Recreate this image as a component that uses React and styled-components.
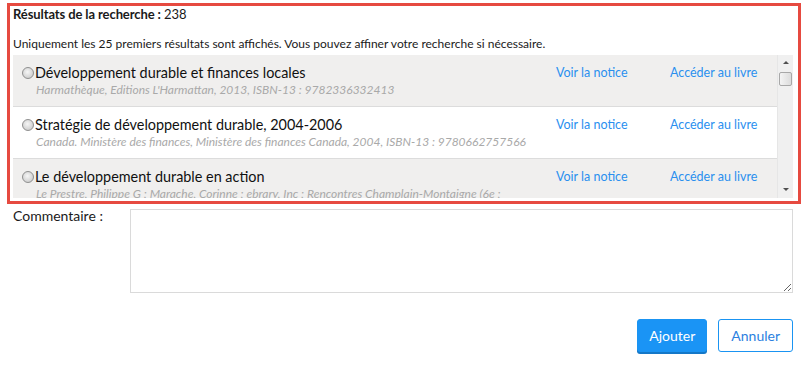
import React from "react";
import styled, { createGlobalStyle } from "styled-components";

const Global = createGlobalStyle`
  html, body { margin: 0; padding: 0; background: #fff; }
  body { font-family: Lato, "Open Sans", sans-serif; color: #1a1a1a; }
`;

const Page = styled.div`
  width: 805px;
  height: 365px;
  box-sizing: border-box;
  padding: 3px 4px 0 7px;
  display: flex;
  flex-direction: column;
`;

const Panel = styled.section`
  border: 3px solid #e64a40;
  padding: 0 5px 3px 3px;
  display: flex;
  flex-direction: column;
`;

const Title = styled.div`
  font-size: 13px;
  letter-spacing: -0.1px;
  line-height: 16px;
  b { font-weight: 700; }
`;

const Info = styled.div`
  font-size: 12px;
  line-height: 16px;
  margin-top: 14px;
`;

const ListBox = styled.div`
  margin-top: 3px;
  height: 143px;
  display: flex;
  overflow: hidden;
`;

const Rows = styled.div`
  flex: 1;
  overflow: hidden;
`;

const Row = styled.div`
  height: 52px;
  box-sizing: border-box;
  border-bottom: 1px solid #dcdcdc;
  background: ${(p) => (p.$alt ? "#f0efee" : "#fff")};
  display: grid;
  grid-template-columns: 1fr 114px 107px;
  align-items: start;
  padding-left: 9px;
  padding-top: 9px;
`;

const Main = styled.div`
  display: flex;
  flex-direction: column;
  min-width: 0;
`;

const TitleLine = styled.label`
  display: flex;
  align-items: center;
  font-size: 14.4px;
  line-height: 18px;
  color: #111;
`;

const Radio = styled.span`
  width: 12px;
  height: 12px;
  border-radius: 50%;
  border: 1px solid #8f8f8f;
  background: radial-gradient(circle at 45% 40%, #f6f6f6, #cfcfcf 75%);
  box-sizing: border-box;
  margin-right: 1px;
  flex: none;
`;

const Sub = styled.div`
  font-size: 12px;
  line-height: 15px;
  font-style: italic;
  color: #a9a9a9;
  padding-left: 14px;
  white-space: nowrap;
  overflow: hidden;
`;

const LinkCell = styled.a`
  font-size: 12.5px;
  line-height: 18px;
  color: #2a8fef;
  text-decoration: none;
  white-space: nowrap;
`;

const Scrollbar = styled.div`
  width: 16px;
  background: #f0f0f0;
  border-left: 1px solid #e6e6e6;
  display: flex;
  flex-direction: column;
  align-items: center;
  justify-content: space-between;
  padding: 6px 0 7px;
  box-sizing: border-box;
  position: relative;
`;

const Arrow = styled.span`
  width: 0;
  height: 0;
  border-left: 3px solid transparent;
  border-right: 3px solid transparent;
  ${(p) =>
    p.$down ? "border-top: 3px solid #505050;" : "border-bottom: 3px solid #505050;"}
`;

const Thumb = styled.span`
  position: absolute;
  top: 17px;
  left: 1px;
  width: 13px;
  height: 14px;
  box-sizing: border-box;
  border: 1px solid #a8a8a8;
  border-radius: 2px;
  background: linear-gradient(to right, #f4f4f4, #dcdcdc);
`;

const CommentRow = styled.div`
  display: flex;
  margin-top: 5px;
`;

const CommentLabel = styled.label`
  width: 117px;
  padding-left: 6px;
  font-size: 14px;
  line-height: 14px;
  flex: none;
`;

const TextArea = styled.textarea`
  flex: 1;
  height: 84px;
  box-sizing: border-box;
  border: 1px solid #dadada;
  margin: 0 8px 0 0;
  font-family: inherit;
  resize: vertical;
  outline: none;
`;

const Actions = styled.div`
  display: flex;
  justify-content: flex-end;
  gap: 11px;
  margin-top: 26px;
  padding-right: 8px;
`;

const Button = styled.button`
  height: 33px;
  padding: 0 ${(p) => (p.$primary ? "11px" : "12px")};
  border-radius: 3px;
  font-family: inherit;
  font-size: 14px;
  border: 1px solid #1a94f2;
  background: ${(p) => (p.$primary ? "#1a94f5" : "#fff")};
  color: ${(p) => (p.$primary ? "#fff" : "#2c7fe0")};
  box-shadow: ${(p) => (p.$primary ? "0 2px 0 #1478c8" : "none")};
  cursor: pointer;
`;

const results = [
  {
    title: "Développement durable et finances locales",
    sub: "Harmathèque, Editions L'Harmattan, 2013, ISBN-13 : 9782336332413",
  },
  {
    title: "Stratégie de développement durable, 2004-2006",
    sub: "Canada. Ministère des finances, Ministère des finances Canada, 2004, ISBN-13 : 9780662757566",
  },
  {
    title: "Le développement durable en action",
    sub: "Le Prestre, Philippe G ; Marache, Corinne ; ebrary, Inc ; Rencontres Champlain-Montaigne (6e ;",
  },
];

export default function App() {
  return (
    <Page>
      <Global />
      <Panel>
        <Title>
          <b>Résultats de la recherche :</b> 238
        </Title>
        <Info>
          Uniquement les 25 premiers résultats sont affichés. Vous pouvez affiner votre recherche si nécessaire.
        </Info>
        <ListBox>
          <Rows>
            {results.map((r, i) => (
              <Row key={i} $alt={i % 2 === 0}>
                <Main>
                  <TitleLine>
                    <Radio />
                    {r.title}
                  </TitleLine>
                  <Sub>{r.sub}</Sub>
                </Main>
                <LinkCell href="#">Voir la notice</LinkCell>
                <LinkCell href="#">Accéder au livre</LinkCell>
              </Row>
            ))}
          </Rows>
          <Scrollbar>
            <Arrow />
            <Thumb />
            <Arrow $down />
          </Scrollbar>
        </ListBox>
      </Panel>
      <CommentRow>
        <CommentLabel>Commentaire :</CommentLabel>
        <TextArea />
      </CommentRow>
      <Actions>
        <Button $primary>Ajouter</Button>
        <Button>Annuler</Button>
      </Actions>
    </Page>
  );
}
